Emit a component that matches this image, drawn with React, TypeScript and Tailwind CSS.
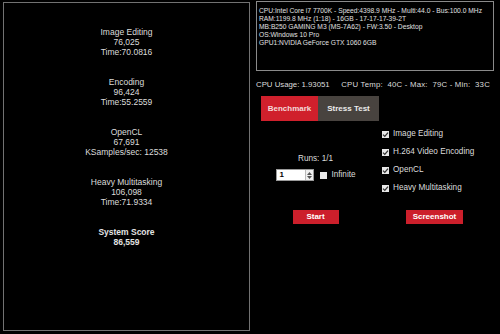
import React from 'react';

const results = [
  { title: 'Image Editing', score: '76,025', detail: 'Time:70.0816' },
  { title: 'Encoding', score: '96,424', detail: 'Time:55.2559' },
  { title: 'OpenCL', score: '67,691', detail: 'KSamples/sec: 12538' },
  { title: 'Heavy Multitasking', score: '106,098', detail: 'Time:71.9334' },
];

const sysInfo = [
  'CPU:Intel Core i7 7700K - Speed:4398.9 MHz - Multi:44.0 - Bus:100.0 MHz',
  'RAM:1199.8 MHz (1:18) - 16GB - 17-17-17-39-2T',
  'MB:B250 GAMING M3 (MS-7A62) - FW:3.50 - Desktop',
  'OS:Windows 10 Pro',
  'GPU1:NVIDIA GeForce GTX 1060 6GB',
];

const tests = ['Image Editing', 'H.264 Video Encoding', 'OpenCL', 'Heavy Multitasking'];

function Check({ checked }: { checked: boolean }) {
  return (
    <span className="flex h-[7px] w-[7px] items-center justify-center bg-[#e8e8e8]">
      {checked && (
        <svg viewBox="0 0 7 7" className="h-[7px] w-[7px]">
          <path d="M1 3.6 L2.8 5.4 L6 1.6" fill="none" stroke="#333" strokeWidth="1.3" />
        </svg>
      )}
    </span>
  );
}

export default function App() {
  return (
    <div
      className="flex h-[334px] w-[500px] overflow-hidden bg-black text-[#dcdcdc]"
      style={{ fontFamily: '"Liberation Sans", Arial, sans-serif' }}
    >
      {/* results panel */}
      <div className="ml-[3px] mt-[2px] flex h-[329px] w-[247px] flex-col items-center border border-[#727272] pt-[24px] text-[8.5px] leading-[10px]">
        {results.map((r) => (
          <div key={r.title} className="mb-[20px] flex flex-col items-center">
            <span>{r.title}</span>
            <span>{r.score}</span>
            <span>{r.detail}</span>
          </div>
        ))}
        <div className="flex flex-col items-center font-bold text-[#e4e4e4]">
          <span>System Score</span>
          <span>86,559</span>
        </div>
      </div>

      {/* controls */}
      <div className="ml-[6px] mt-[1px] flex w-[238px] flex-col">
        <div className="h-[70px] border border-[#8a8a8a] px-[2px] pt-[5px] text-[6.7px] leading-[8px] text-[#e0e0e0]">
          {sysInfo.map((l) => (
            <div key={l} className="whitespace-nowrap">{l}</div>
          ))}
        </div>

        <div className="mt-[9px] flex justify-between whitespace-pre pr-[4px] text-[7.8px] leading-[10px]">
          <span>CPU Usage: 1.93051</span>
          <span className="tracking-[0.2px]">CPU Temp:  40C - Max:  79C - Min:  33C</span>
        </div>

        <div className="ml-[5px] mt-[6px] flex h-[25px] text-[8px] font-bold">
          <div className="flex w-[57px] items-center justify-center bg-[#d0202c] text-[#f4dada]">Benchmark</div>
          <div className="flex w-[61px] items-center justify-center bg-[#48433f] text-[#ececec]">Stress Test</div>
        </div>

        <div className="grid grid-cols-2">
          <div className="flex flex-col items-center pt-[33px] text-[8.2px]">
            <span className="leading-[10px]">Runs: 1/1</span>
            <div className="mt-[5px] flex items-center gap-[6px] pl-[1px]">
              <div className="flex h-[12px] w-[38px] items-stretch border border-[#9a9a9a] bg-white">
                <span className="flex-1 pl-[2px] text-[8px] font-bold leading-[10px] text-black">1</span>
                <span className="flex w-[8px] flex-col items-center justify-center gap-[1px] border-l border-[#bbb] bg-[#f0f0f0]">
                  <svg viewBox="0 0 5 3" className="h-[3px] w-[5px]"><path d="M0 3 L2.5 0 L5 3Z" fill="#555" /></svg>
                  <svg viewBox="0 0 5 3" className="h-[3px] w-[5px]"><path d="M0 0 L2.5 3 L5 0Z" fill="#555" /></svg>
                </span>
              </div>
              <div className="flex items-center gap-[4px]">
                <Check checked={false} />
                <span>Infinite</span>
              </div>
            </div>
          </div>
          <div className="flex flex-col pl-[7px] pt-[4px] text-[8.2px]">
            {tests.map((t) => (
              <div key={t} className="flex h-[18px] items-center gap-[4px]">
                <Check checked />
                <span>{t}</span>
              </div>
            ))}
          </div>
        </div>

        <div className="mt-[13px] grid grid-cols-2 text-[8px] font-bold text-white">
          <div className="flex justify-center">
            <div className="flex h-[14px] w-[46px] items-center justify-center bg-[#cc1f2b]">Start</div>
          </div>
          <div className="flex justify-center">
            <div className="flex h-[14px] w-[57px] items-center justify-center bg-[#cc1f2b]">Screenshot</div>
          </div>
        </div>
      </div>
    </div>
  );
}
